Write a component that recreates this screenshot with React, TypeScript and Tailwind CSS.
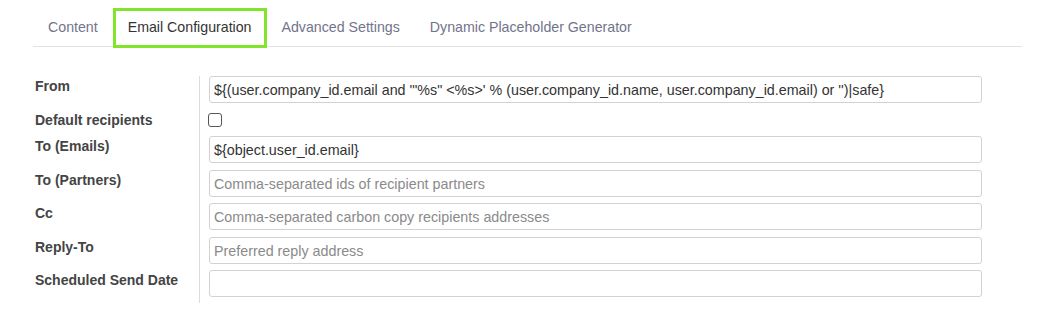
import { type ReactNode } from 'react'

type Field = {
  label: string
  value?: string
  placeholder?: string
  checkbox?: boolean
  pb: string
}

const TABS = ['Content', 'Email Configuration', 'Advanced Settings', 'Dynamic Placeholder Generator']
const ACTIVE = 'Email Configuration'

const FIELDS: Field[] = [
  {
    label: 'From',
    value: `\${(user.company_id.email and '"%s" <%s>' % (user.company_id.name, user.company_id.email) or '')|safe}`,
    pb: 'pb-[7px]',
  },
  { label: 'Default recipients', checkbox: true, pb: 'pb-0' },
  { label: 'To (Emails)', value: '${object.user_id.email}', pb: 'pb-[7px]' },
  { label: 'To (Partners)', placeholder: 'Comma-separated ids of recipient partners', pb: 'pb-[6px]' },
  { label: 'Cc', placeholder: 'Comma-separated carbon copy recipients addresses', pb: 'pb-[7px]' },
  { label: 'Reply-To', placeholder: 'Preferred reply address', pb: 'pb-[6px]' },
  { label: 'Scheduled Send Date', placeholder: '', pb: 'pb-[6px]' },
]

function Cell({ children, pb }: { children: ReactNode; pb: string }) {
  return <div className={`border-l border-[#dcdcdc] pl-[9px] ${pb}`}>{children}</div>
}

export default function App() {
  return (
    <div className="w-full h-[327px] bg-white font-['Liberation_Sans',Arial,sans-serif]">
      {/* tabs */}
      <div className="ml-[33px] mr-[36px] pt-[8px] flex border-b border-[#e3e3e3]">
        {TABS.map(t =>
          t === ACTIVE ? (
            <div
              key={t}
              className="relative z-10 h-[40px] -mb-[2px] px-[12px] flex items-center border-[3px] border-[#80e52b] bg-white text-[14.2px] text-[#333]"
            >
              {t}
            </div>
          ) : (
            <div key={t} className="h-[40px] -mb-[2px] px-[15px] flex items-center text-[14.2px] text-[#72748c]">
              {t}
            </div>
          )
        )}
      </div>

      {/* form */}
      <div className="mt-[29px] ml-[35px] mr-[76px] grid grid-cols-[164px_1fr]">
        {FIELDS.map(f => (
          <div key={f.label} className="contents">
            <div className="text-[14px] leading-[20px] font-bold text-[#444]">{f.label}</div>
            <Cell pb={f.pb}>
              {f.checkbox ? (
                <div className="h-[26px] pt-[3px]">
                  <div className="w-[14px] h-[14px] -ml-[1px] rounded-[3px] border-[1.5px] border-[#555] bg-white" />
                </div>
              ) : (
                <input
                  readOnly
                  value={f.value ?? ''}
                  placeholder={f.placeholder}
                  className="block w-full h-[27px] px-[4px] rounded-[3px] border border-[#d2d2d2] text-[14.3px] text-[#333] placeholder:text-[#8a8a8a] outline-none"
                />
              )}
            </Cell>
          </div>
        ))}
      </div>
    </div>
  )
}
